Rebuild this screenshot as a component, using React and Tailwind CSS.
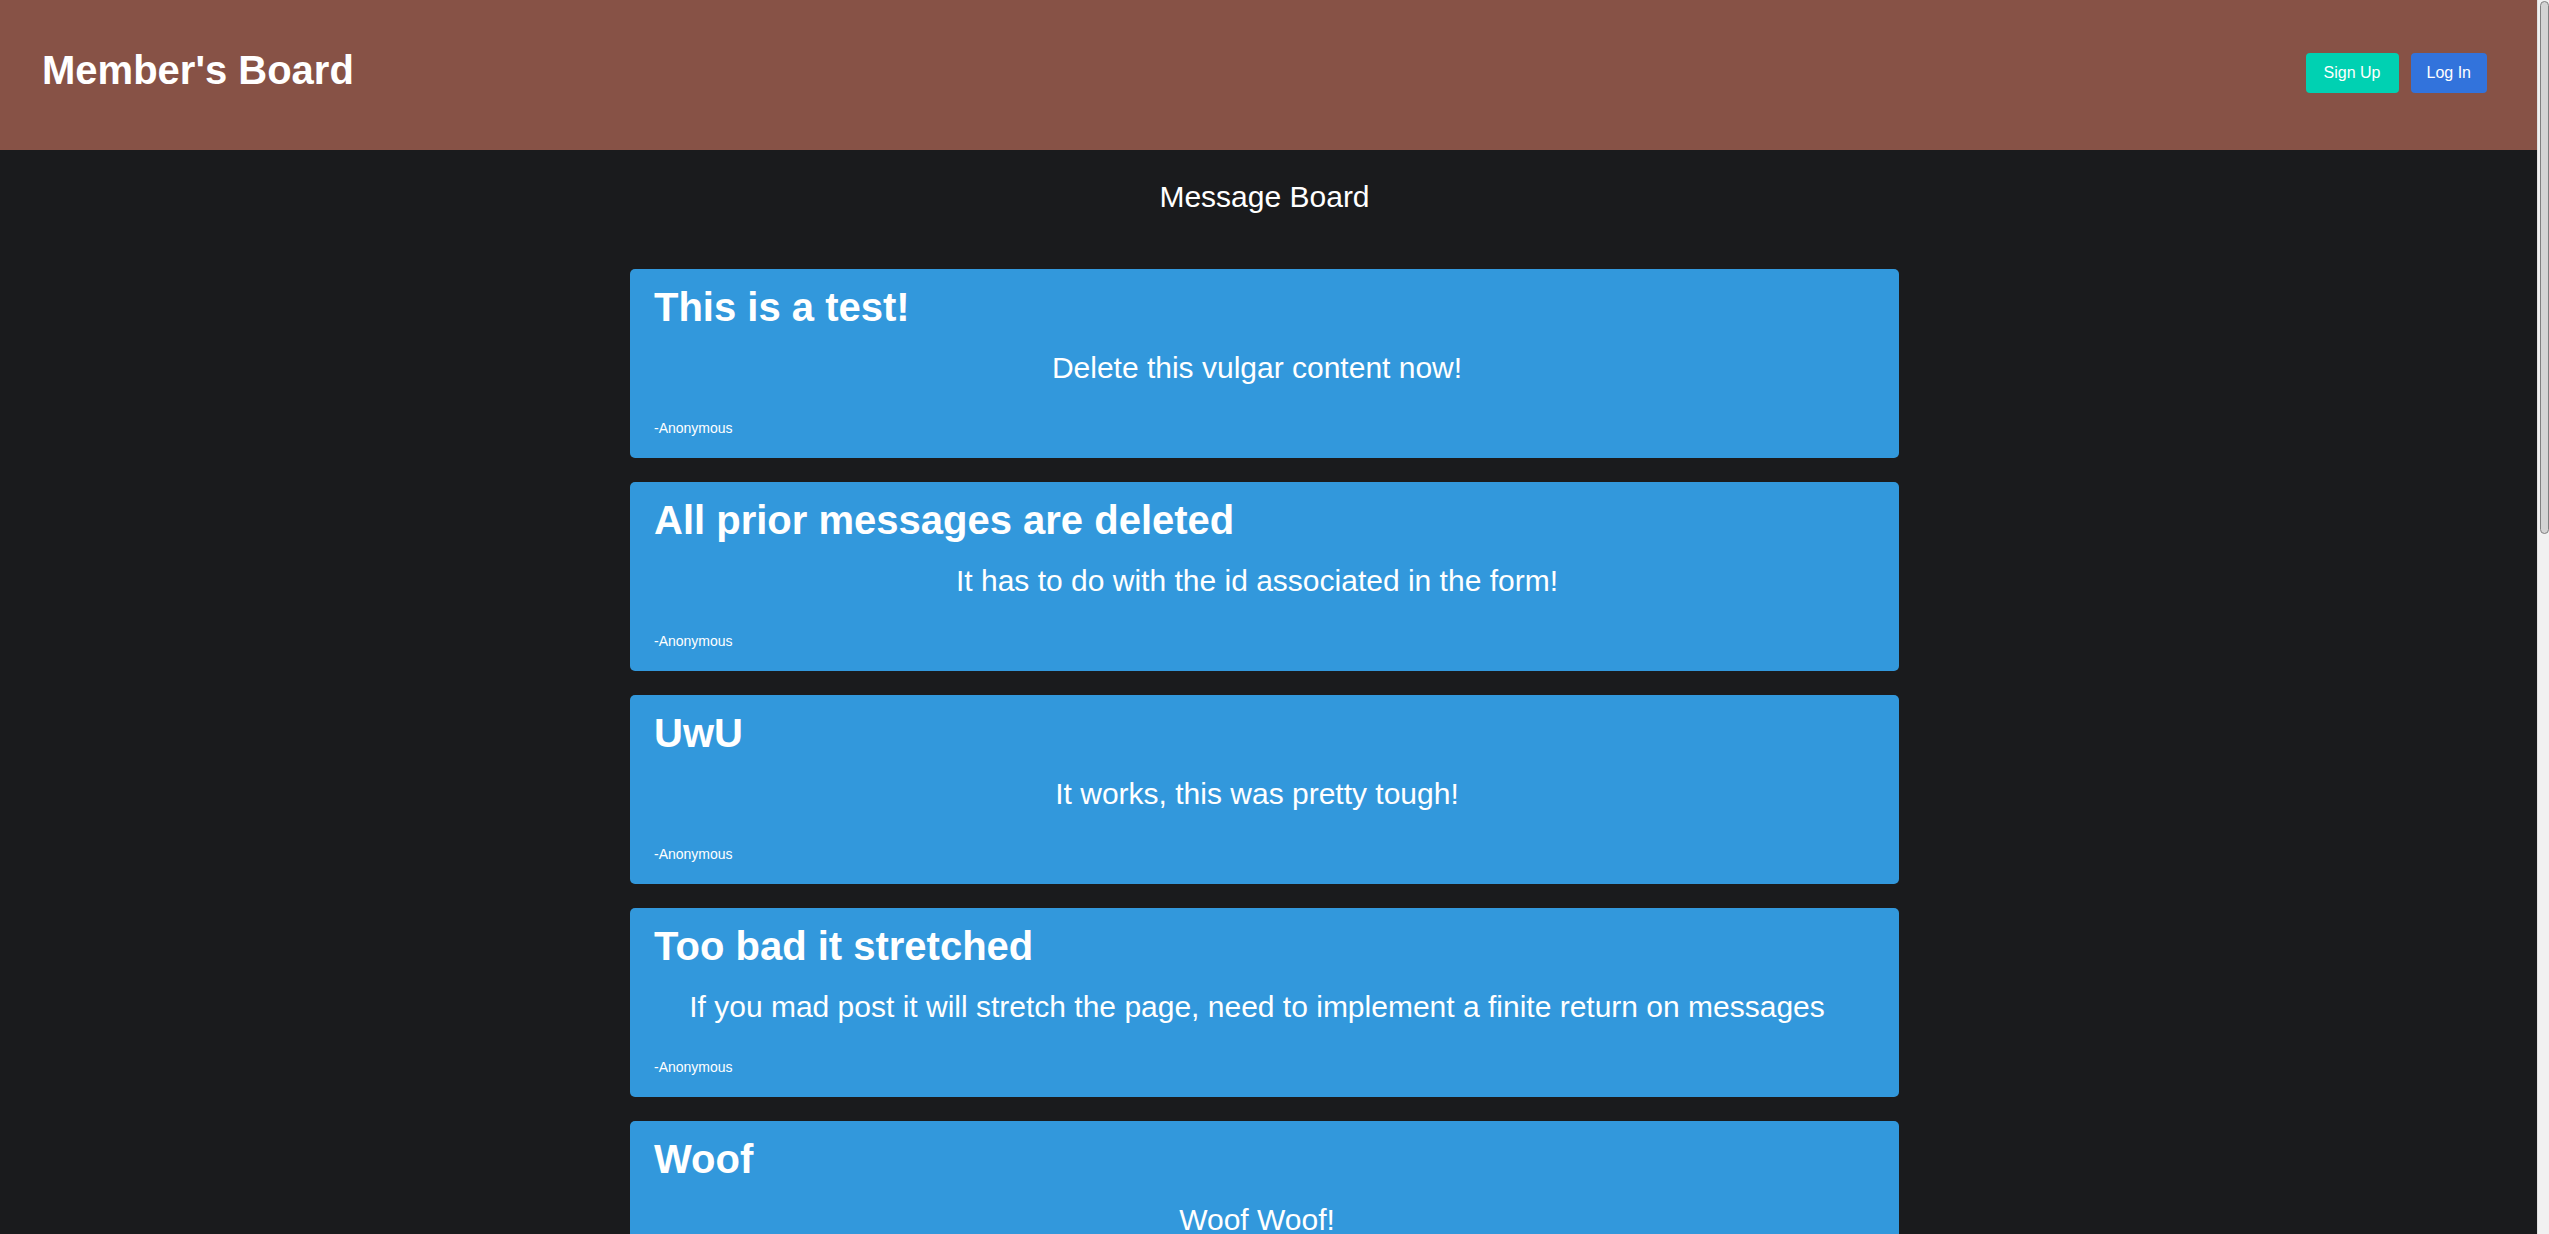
import React from 'react';

const messages = [
  { title: 'This is a test!', body: 'Delete this vulgar content now!', author: 'Anonymous' },
  { title: 'All prior messages are deleted', body: 'It has to do with the id associated in the form!', author: 'Anonymous' },
  { title: 'UwU', body: 'It works, this was pretty tough!', author: 'Anonymous' },
  { title: 'Too bad it stretched', body: 'If you mad post it will stretch the page, need to implement a finite return on messages', author: 'Anonymous' },
  { title: 'Woof', body: 'Woof Woof!', author: 'Anonymous' },
];

function Header() {
  return (
    <header className="bg-[#875246] h-[150px] flex items-center justify-between pl-[42px] pr-[50px]">
      <h1 className="text-white text-[40px] leading-[46px] font-bold pb-[10px]">Member's Board</h1>
      <div className="flex gap-[12px] pb-[4px]">
        <button className="bg-[#00d1b2] text-white text-[16px] h-[40px] px-[18px] rounded-[4px]">Sign Up</button>
        <button className="bg-[#3273dc] text-white text-[16px] h-[40px] px-[16px] rounded-[4px]">Log In</button>
      </div>
    </header>
  );
}

function MessageCard({ title, body, author }) {
  return (
    <div className="bg-[#3298dc] rounded-[5px] px-[24px] pt-[15px] pb-[22px] text-white">
      <h2 className="text-[40px] leading-[46px] font-bold">{title}</h2>
      <p className="text-[30px] leading-[34px] text-center mt-[21px] pr-[15px]">{body}</p>
      <p className="text-[14px] leading-[16px] mt-[35px]">-{author}</p>
    </div>
  );
}

// fake window scrollbar, the screenshot had one
function Scrollbar() {
  return (
    <div className="w-[12px] shrink-0 bg-[#f1f1f1] border-l border-[#e2e2e2] pl-[2px]">
      <div className="h-[533px] mt-[1px] bg-[#d3d3d3] border border-[#808080] rounded-t-[5px] rounded-b-[5px]" />
    </div>
  );
}

export default function App() {
  return (
    <div className="min-h-screen flex bg-[#1a1b1d] font-['Liberation_Sans',Arial,sans-serif]">
      <div className="flex-1 min-w-0">
        <Header />
        <main className="pb-[60px] pr-[8px]">
          <h3 className="text-white text-[30px] leading-[34px] text-center mt-[30px]">Message Board</h3>
          <div className="w-[1269px] mx-auto mt-[55px] flex flex-col gap-[24px]">
            {messages.map((m, i) => (
              <MessageCard key={i} {...m} />
            ))}
          </div>
        </main>
      </div>
      <Scrollbar />
    </div>
  );
}
